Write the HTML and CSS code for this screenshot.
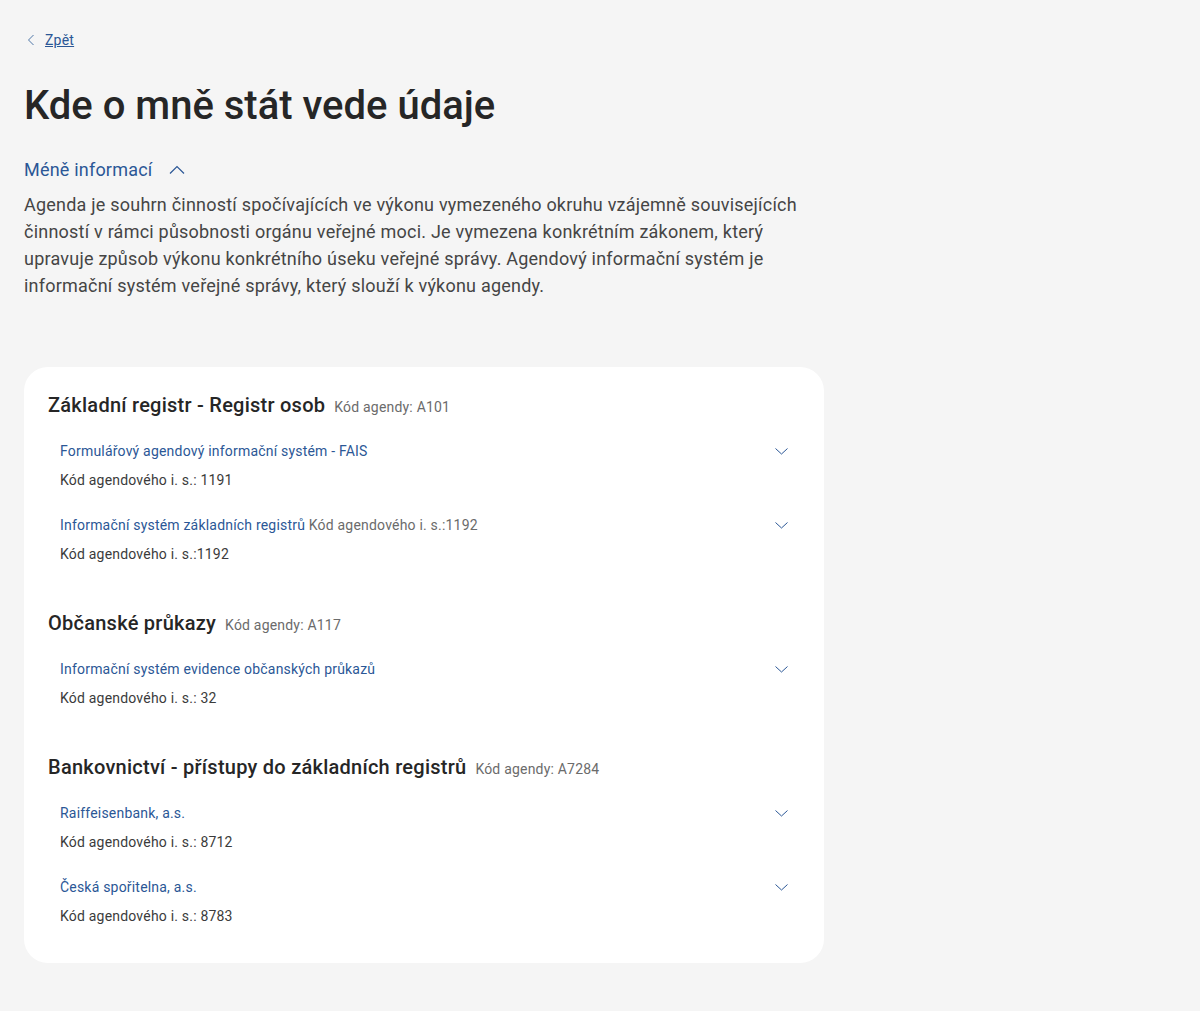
FILE: index.html
```html
<!DOCTYPE html>
<html lang="cs">
<head>
    <meta charset="UTF-8">
    <meta name="viewport" content="width=device-width, initial-scale=1.0">
    <title>Kde o mně stát vede údaje</title>
    <link rel="stylesheet" href="styles.css">
</head>
<body>

    <div class="page">
        <a class="back" href="#">
            <svg width="8" height="12" viewBox="0 0 8 12"><path d="M6.5 1 1.5 6l5 5" fill="none" stroke="#4f77a8" stroke-width="1"/></svg>
            <span>Zpět</span>
        </a>

        <h1>Kde o mně stát vede údaje</h1>

        <!-- Toggle with intro text -->
        <button class="toggle">
            Méně informací
            <svg width="16" height="10" viewBox="0 0 16 10"><path d="M1 8.5 8 1.5l7 7" fill="none" stroke="#2b5796" stroke-width="1.2"/></svg>
        </button>
        <p class="intro">Agenda je souhrn činností spočívajících ve výkonu vymezeného okruhu vzájemně souvisejících činností v rámci působnosti orgánu veřejné moci. Je vymezena konkrétním zákonem, který upravuje způsob výkonu konkrétního úseku veřejné správy. Agendový informační systém je informační systém veřejné správy, který slouží k výkonu agendy.</p>

        <div class="card">
            <div class="section">
                <h2>Základní registr - Registr osob <span class="code">Kód agendy: A101</span></h2>
                <div class="item">
                    <div class="item-head">
                        <a href="#">Formulářový agendový informační systém - FAIS</a>
                        <svg class="chevron" width="13" height="8" viewBox="0 0 13 8"><path d="M.5 1.5l6 5.5 6-5.5" fill="none" stroke="#2b5796" stroke-width="1"/></svg>
                    </div>
                    <div class="item-code">Kód agendového i. s.: 1191</div>
                </div>
                <div class="item">
                    <div class="item-head">
                        <span><a href="#">Informační systém základních registrů</a> <span class="muted">Kód agendového i. s.:1192</span></span>
                        <svg class="chevron" width="13" height="8" viewBox="0 0 13 8"><path d="M.5 1.5l6 5.5 6-5.5" fill="none" stroke="#2b5796" stroke-width="1"/></svg>
                    </div>
                    <div class="item-code">Kód agendového i. s.:1192</div>
                </div>
            </div>

            <div class="section">
                <h2>Občanské průkazy <span class="code">Kód agendy: A117</span></h2>
                <div class="item">
                    <div class="item-head">
                        <a href="#">Informační systém evidence občanských průkazů</a>
                        <svg class="chevron" width="13" height="8" viewBox="0 0 13 8"><path d="M.5 1.5l6 5.5 6-5.5" fill="none" stroke="#2b5796" stroke-width="1"/></svg>
                    </div>
                    <div class="item-code">Kód agendového i. s.: 32</div>
                </div>
            </div>

            <div class="section">
                <h2>Bankovnictví - přístupy do základních registrů <span class="code">Kód agendy: A7284</span></h2>
                <div class="item">
                    <div class="item-head">
                        <a href="#">Raiffeisenbank, a.s.</a>
                        <svg class="chevron" width="13" height="8" viewBox="0 0 13 8"><path d="M.5 1.5l6 5.5 6-5.5" fill="none" stroke="#2b5796" stroke-width="1"/></svg>
                    </div>
                    <div class="item-code">Kód agendového i. s.: 8712</div>
                </div>
                <div class="item">
                    <div class="item-head">
                        <a href="#">Česká spořitelna, a.s.</a>
                        <svg class="chevron" width="13" height="8" viewBox="0 0 13 8"><path d="M.5 1.5l6 5.5 6-5.5" fill="none" stroke="#2b5796" stroke-width="1"/></svg>
                    </div>
                    <div class="item-code">Kód agendového i. s.: 8783</div>
                </div>
            </div>
        </div>
    </div>

</body>
</html>
```

FILE: styles.css
```css
* {
    margin: 0;
    padding: 0;
    box-sizing: border-box;
    font-family: Roboto, "Liberation Sans", sans-serif;
}

body {
    background-color: #f5f5f5;
    color: #262626;
}

.page {
    width: 800px;
    margin-left: 24px;
    padding-top: 30px;
    padding-bottom: 48px;
}

/* Back link */
.back {
    display: flex;
    align-items: center;
    gap: 10px;
    padding-left: 3px;
    font-size: 14px;
    line-height: 20px;
    color: #2b5796;
    letter-spacing: 0.2px;
}

.back span {
    text-decoration: underline;
}

h1 {
    font-size: 40px;
    line-height: 48px;
    font-weight: 500;
    margin-top: 32px;
    color: #262626;
}

.toggle {
    display: flex;
    align-items: center;
    gap: 17px;
    margin-top: 28px;
    background: none;
    border: none;
    font-size: 18px;
    line-height: 24px;
    letter-spacing: 0.2px;
    color: #2b5796;
    cursor: pointer;
}

.intro {
    margin-top: 9px;
    font-size: 18px;
    line-height: 27px;
    letter-spacing: 0.22px;
    color: #454545;
}

/* Card with agendas */
.card {
    margin-top: 68px;
    background: white;
    border-radius: 24px;
    padding: 24px;
}

.section + .section {
    margin-top: 32px;
}

.section h2 {
    display: flex;
    align-items: baseline;
    gap: 9px;
    font-size: 20px;
    line-height: 28px;
    font-weight: 500;
    letter-spacing: 0.25px;
    color: #262626;
    margin-bottom: 10px;
}

.section h2 .code {
    font-size: 14px;
    line-height: 20px;
    font-weight: 400;
    letter-spacing: 0.2px;
    color: #6b6b6b;
}

.item {
    padding: 12px 12px 13px;
}

.item-head {
    display: flex;
    justify-content: space-between;
    align-items: center;
    font-size: 14px;
    line-height: 20px;
    letter-spacing: 0.2px;
    margin-bottom: 9px;
}

.item-head a {
    color: #2b5796;
    text-decoration: none;
}

.item-head .muted {
    color: #6b6b6b;
}

.item-code {
    font-size: 14px;
    line-height: 20px;
    letter-spacing: 0.2px;
    color: #3b3b3b;
}
```
